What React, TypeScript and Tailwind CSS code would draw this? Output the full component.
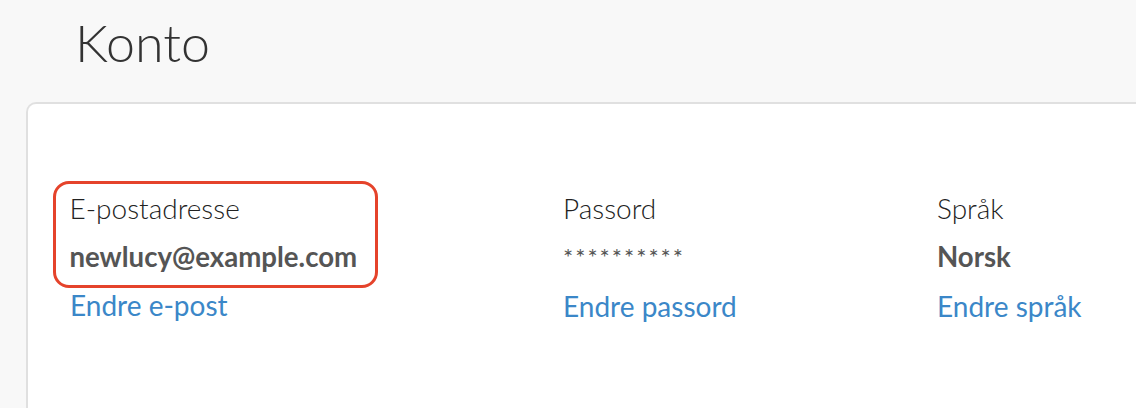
import React from 'react';

const fields = [
  { label: 'E-postadresse', value: 'newlucy@example.com', link: 'Endre e-post', kind: 'bold', width: 'w-[493px]' },
  { label: 'Passord', value: '**********', link: 'Endre passord', kind: 'mask', width: 'w-[374px]' },
  { label: 'Språk', value: 'Norsk', link: 'Endre språk', kind: 'bold', width: 'w-[260px]' },
];

function Field({ label, value, kind }: { label: string; value: string; kind: string }) {
  return (
    <>
      <div className="text-[28px] font-light leading-[40px] text-[#222]">{label}</div>
      {kind === 'mask' ? (
        <div className="mt-[9px] text-[24px] leading-[40px] tracking-[2px] text-[#555]">{value}</div>
      ) : (
        <div className="mt-[9px] text-[27.6px] font-bold leading-[40px] text-[#555]">{value}</div>
      )}
    </>
  );
}

export default function App() {
  return (
    <div className="min-h-[408px] w-[1136px] overflow-hidden bg-[#f8f8f8] font-['Lato',sans-serif]">
      <h1 className="pl-[75px] pt-[10px] text-[52px] font-light leading-[64px] text-[#333]">Konto</h1>
      <div className="ml-[26px] mt-[28px] h-[320px] w-[1140px] rounded-tl-[10px] border-l-2 border-t-2 border-[#e0e0e0] bg-white pl-[42px] pt-[84px]">
        <div className="flex">
          {fields.map((f, i) => (
            <div key={f.label} className={`${f.width} flex shrink-0 flex-col`}>
              {i === 0 ? (
                <div className="-ml-[17px] -mt-[7px] w-[325px] rounded-[16px] border-[3.5px] border-[#e5432b] pb-[8.5px] pl-[13.5px] pt-[3.5px]">
                  <Field label={f.label} value={f.value} kind={f.kind} />
                </div>
              ) : (
                <Field label={f.label} value={f.value} kind={f.kind} />
              )}
              <a className={`${i === 0 ? '-mt-[3px]' : 'mt-[9px]'} text-[28px] leading-[40px] text-[#3b87c8]`}>{f.link}</a>
            </div>
          ))}
        </div>
      </div>
    </div>
  );
}
